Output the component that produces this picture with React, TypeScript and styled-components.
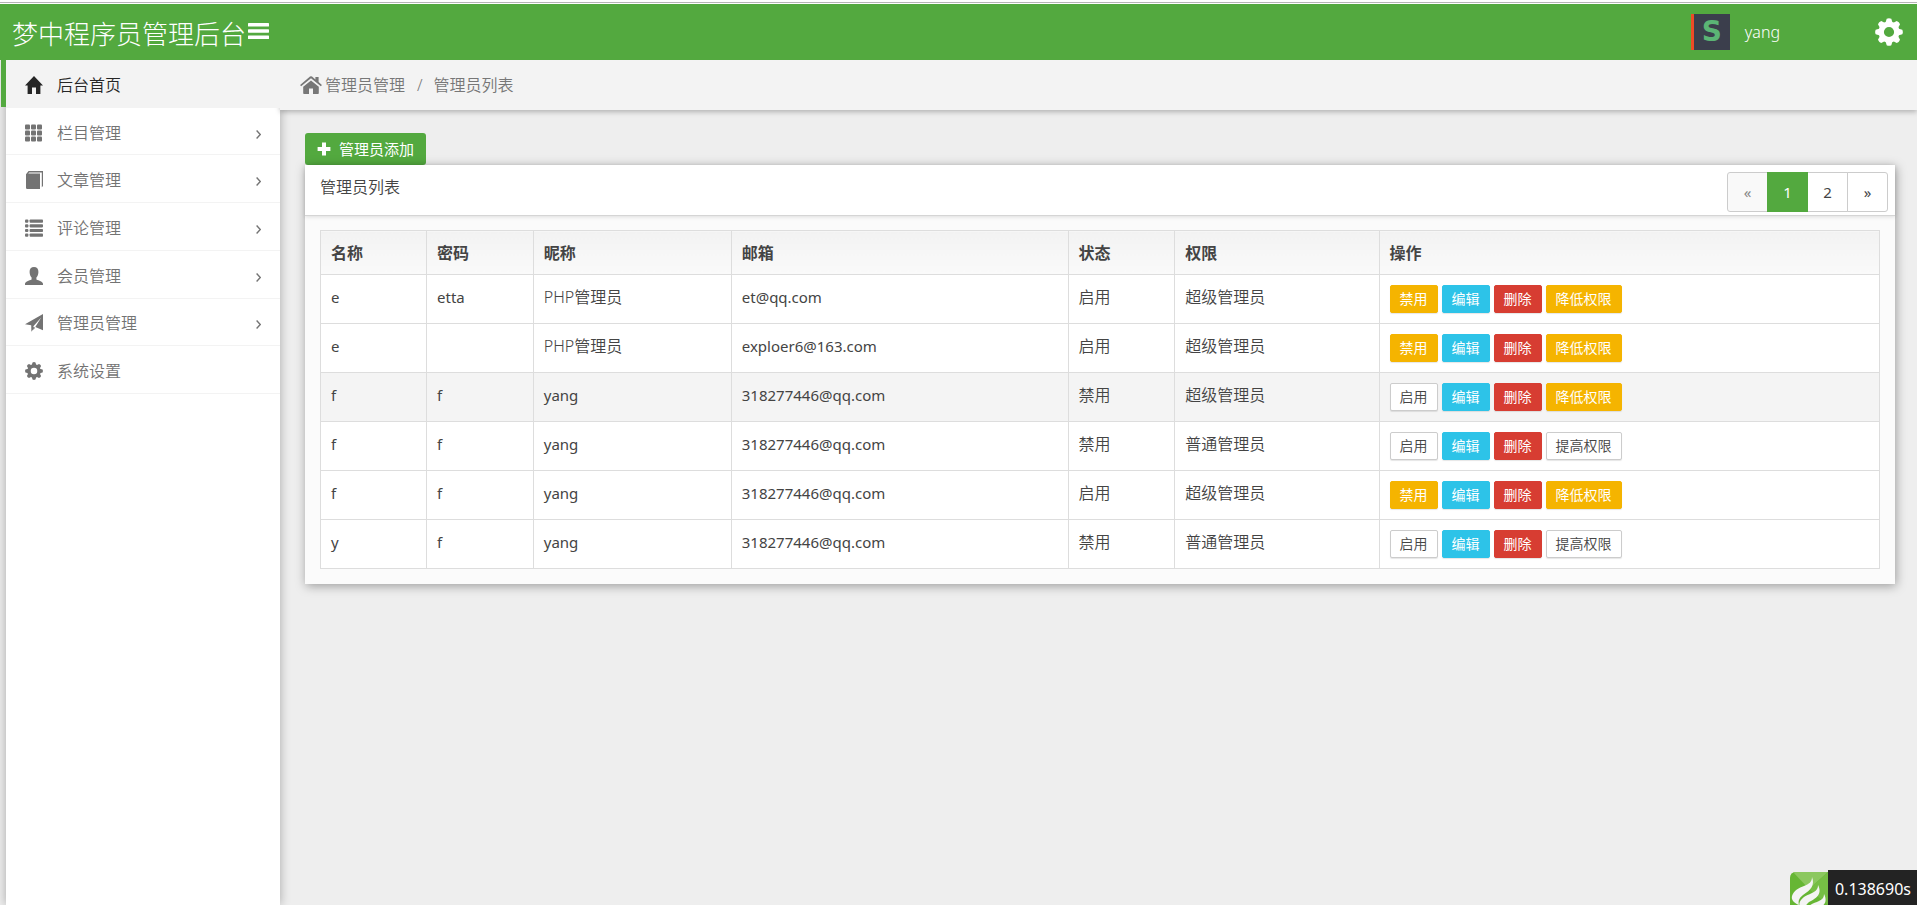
import React from "react";
import styled, { createGlobalStyle, css } from "styled-components";

const GREEN = "#53a93f";

const GlobalStyle = createGlobalStyle`
  * { box-sizing: border-box; }
  body {
    margin: 0;
    background: #eee;
    color: #444;
    font: 350 16px/24px "Noto Sans", "Noto Sans CJK SC", sans-serif;
  }
  a { color: inherit; text-decoration: none; }
  button { font: inherit; cursor: pointer; }
  ul, ol { margin: 0; padding: 0; list-style: none; }
  svg { display: block; flex: none; }
`;

/* ---------- Icons ---------- */

type IconProps = { size?: number };

const HomeIcon = ({ size = 18 }: IconProps) => (
  <svg width={size} height={size} viewBox="0 0 18 18" fill="currentColor">
    <path d="M9 0L18 9.6H15.4V18H11V11.5H7V18H2.6V9.6H0Z" />
  </svg>
);

const GridIcon = ({ size = 18 }: IconProps) => (
  <svg width={size} height={size} viewBox="0 0 18 18" fill="currentColor">
    {[0, 6, 12].map((y) =>
      [0, 6, 12].map((x) => (
        <rect key={`${x}-${y}`} x={x} y={y + 0.5} width="5" height="5" rx="1" />
      ))
    )}
  </svg>
);

const BookIcon = ({ size = 18 }: IconProps) => (
  <svg width={size} height={size} viewBox="0 0 18 18" fill="currentColor">
    <path d="M1 3.2L3.6 0H18V15L16.8 16.2V1.4H4.2L3.2 2.6H15V18H2.2Q1 18 1 16.8Z" />
  </svg>
);

const ListIcon = ({ size = 18 }: IconProps) => (
  <svg width={size} height={size} viewBox="0 0 18 18" fill="currentColor">
    {[0.5, 5.2, 9.9, 14.5].map((y) => (
      <g key={y}>
        <rect x="0" y={y} width="3.4" height="3.2" rx="1" />
        <rect x="4.6" y={y} width="13.4" height="3.2" rx="0.8" />
      </g>
    ))}
  </svg>
);

const UserIcon = ({ size = 18 }: IconProps) => (
  <svg width={size} height={size} viewBox="0 0 18 18" fill="currentColor">
    <path d="M9 0C11.8 0 13.6 1.9 13.4 5C13.3 7.6 12.6 9.4 11.4 10.6V12.6C13.8 13.6 18 14.8 18 17V18H0V17C0 14.8 4.2 13.6 6.6 12.6V10.6C5.4 9.4 4.7 7.6 4.6 5C4.4 1.9 6.2 0 9 0Z" />
  </svg>
);

const SendIcon = ({ size = 18 }: IconProps) => (
  <svg width={size} height={size} viewBox="0 0 18 18" fill="currentColor">
    <path d="M18 0V16.2L10.3 13L16.2 3.6L8.4 12.2L8.8 14.4L6.4 17.8L6.2 11.2L0 10.2Z" />
    <path d="M10 13.6L8.6 16L8.2 13Z" />
  </svg>
);

const GearIcon = ({ size = 18 }: IconProps) => (
  <svg width={size} height={size} viewBox="-14 -14 28 28" fill="currentColor">
    <circle r="7.8" fill="none" stroke="currentColor" strokeWidth="5.4" />
    {[0, 45, 90, 135, 180, 225, 270, 315].map((a) => (
      <path
        key={a}
        d="M-3.6 -9L-2.3 -13.3Q0 -14.4 2.3 -13.3L3.6 -9Z"
        transform={`rotate(${a})`}
      />
    ))}
  </svg>
);

const Chevron = styled.svg`
  margin-top: 3px;
`;

const ChevronIcon = () => (
  <Chevron width="5" height="9" viewBox="0 0 5 9" fill="none" stroke="currentColor" strokeWidth="1.4">
    <path d="M0.6 0.6L4.3 4.5L0.6 8.4" />
  </Chevron>
);

const BarsIcon = () => (
  <svg width="21" height="16" viewBox="0 0 21 16" fill="currentColor">
    {[0, 6.2, 12.5].map((y) => (
      <rect key={y} y={y} width="21" height="3.5" rx="0.6" />
    ))}
  </svg>
);

const ChimneyHomeIcon = () => (
  <svg width="22" height="18" viewBox="0 0 22 18" fill="currentColor">
    <path d="M11 4.4L18.8 10.8V17.2Q18.8 18 18 18H13V12.4H9V18H4Q3.2 18 3.2 17.2V10.8Z" />
    <path d="M10 0.6Q11 -0.2 12 0.6L15.4 3.4V1H18.6V6.1L21.9 8.9L20.9 10.2L11 2.2L1.1 10.2L0.1 8.9Z" />
  </svg>
);

const PlusIcon = () => (
  <svg width="14" height="14" viewBox="0 0 14 14" fill="currentColor">
    <path d="M5 0.6H9V5H13.4V9H9V13.4H5V9H0.6V5H5Z" />
  </svg>
);

const FlameLogo = () => (
  <svg width="38" height="33" viewBox="0 0 38 33">
    <path d="M6 0H38V33H0V6Q0 0 6 0Z" fill="#66b634" />
    <path d="M3 0H38L19 17Z" fill="#8cc85f" />
    <path d="M38 0V33L19 17Z" fill="#76be45" />
    <path
      d="M22 5C25 13 21 18 13 23C9 26 8 29 9 33C4 31 1 28 2 24C4 18 9 16 14 14C19 12 22 10 22 5Z"
      fill="#f4f4f4"
    />
    <path
      d="M28 13C32 21 28 25 21 29C17 31 15 34 15 37C9 36 8 32 11 28C14 24 18 23 22 21C26 19 28 17 28 13Z"
      fill="#f4f4f4"
    />
    <path d="M34 22C38 30 34 34 27 37H17C19 32 25 31 29 29C33 27 34 25 34 22Z" fill="#f4f4f4" />
  </svg>
);

/* ---------- Page frame ---------- */

const Page = styled.div`
  display: flex;
  flex-direction: column;
  min-height: 100vh;
`;

const TopEdge = styled.div`
  height: 4px;
  padding-top: 2px;
  background: #fff;

  &::after {
    content: "";
    display: block;
    height: 1px;
    background: #b5b5b5;
  }
`;

const Header = styled.header`
  position: relative;
  z-index: 1;
  display: flex;
  align-items: center;
  height: 56px;
  padding: 0 14px 0 12px;
  background: ${GREEN};
  color: #fff;
`;

const Brand = styled.a`
  padding-top: 3px;
  margin-right: 2px;
  font-size: 26px;
  line-height: 36px;
  font-weight: 300;
`;

const IconButton = styled.button`
  display: flex;
  padding: 0;
  border: 0;
  background: none;
  color: #fff;
`;

const MenuToggle = styled(IconButton)`
  margin-bottom: 2px;
`;

const Account = styled.a`
  display: flex;
  align-items: center;
  gap: 15px;
  margin-left: auto;
  margin-right: 95px;
  font-size: 16px;
  font-weight: 300;
`;

const Avatar = styled.span`
  display: flex;
  align-items: center;
  justify-content: center;
  width: 39px;
  height: 36px;
  border-left: 3px solid #ee4b26;
  background: #3b3e4c;
  color: #5bb475;
  font: bold 28px/36px "DejaVu Sans", sans-serif;
`;

const Body = styled.div`
  display: flex;
  flex: 1;
`;

/* ---------- Sidebar ---------- */

const Sidebar = styled.nav`
  width: 274px;
  flex: none;
  margin-left: 6px;
  background: #fff;
  box-shadow: 0 0 10px rgba(0, 0, 0, 0.3);
`;

const Menu = styled.ul`
  display: grid;
  grid-auto-rows: 1fr;
  height: 334px;
`;

const MenuItem = styled.li<{ $active?: boolean }>`
  position: relative;
  border-bottom: 1px solid #f3f3f3;
  color: #737373;

  ${(p) =>
    p.$active &&
    css`
      background: #f3f3f3;
      color: #262626;

      &::before {
        content: "";
        position: absolute;
        left: -5px;
        top: 0;
        bottom: 0;
        width: 5px;
        background: ${GREEN};
      }
    `}
`;

const MenuLink = styled.a`
  display: flex;
  align-items: center;
  gap: 14px;
  height: 100%;
  padding: 3px 19px 0;
`;

const MenuText = styled.span`
  flex: 1;
`;

/* ---------- Content ---------- */

const Main = styled.main`
  flex: 1;
  min-width: 0;
`;

const Breadcrumb = styled.ol`
  display: flex;
  align-items: center;
  height: 50px;
  padding: 0 20px;
  background: #f3f3f3;
  box-shadow: 0 2px 5px rgba(0, 0, 0, 0.25);
  color: #777;
`;

const Crumb = styled.li`
  display: flex;
  align-items: center;
  gap: 3px;

  & + &::before {
    content: "/";
    padding: 0 8px 0 12px;
  }
`;

const Content = styled.div`
  padding: 23px 22px 40px 25px;
`;

const AddButton = styled.button`
  display: flex;
  align-items: center;
  gap: 8px;
  height: 32px;
  padding: 0 12px;
  border: 0;
  border-radius: 3px;
  background: ${GREEN};
  color: #fff;
  font-size: 15px;
  font-weight: 400;
`;

const Panel = styled.section`
  background: #fbfbfb;
  box-shadow: 1px 2px 10px rgba(0, 0, 0, 0.35);
`;

const PanelHead = styled.div`
  display: flex;
  justify-content: space-between;
  align-items: flex-start;
  height: 51px;
  padding: 7px 7px 0 15px;
  background: #fff;
  border-bottom: 1px solid #d5d5d5;
  box-shadow: 0 1px 4px rgba(0, 0, 0, 0.12);
`;

const PanelTitle = styled.h1`
  margin: 0;
  padding-top: 3px;
  font-size: 16px;
  font-weight: 350;
  line-height: 24px;
`;

const Pager = styled.ul`
  display: flex;
`;

const PageItem = styled.li`
  & + & {
    margin-left: -1px;
  }
  &:first-child button {
    border-radius: 3px 0 0 3px;
  }
  &:last-child button {
    border-radius: 0 3px 3px 0;
  }
`;

const PageButton = styled.button<{ $current?: boolean }>`
  position: relative;
  z-index: ${(p) => (p.$current ? 1 : 0)};
  width: 41px;
  height: 40px;
  padding: 0;
  border: 1px solid ${(p) => (p.$current ? GREEN : "#ccc")};
  background: ${(p) => (p.$current ? GREEN : "#fff")};
  color: ${(p) => (p.$current ? "#fff" : "#444")};
  font-size: 15px;
  font-weight: 400;

  &:disabled {
    background: #f9f9f9;
    color: #888;
  }
`;

const TableWrap = styled.div`
  padding: 14px 15px 15px;
`;

const Table = styled.table`
  width: 100%;
  table-layout: fixed;
  border-collapse: collapse;
  background: #fff;
`;

const Col = styled.col<{ $share: string }>`
  width: ${(p) => p.$share};
`;

const HeadCell = styled.th`
  height: 44px;
  padding: 0 10px;
  border: 1px solid #ddd;
  background: linear-gradient(#f2f2f2, #fafafa);
  text-align: left;
  font-weight: 700;
`;

const Row = styled.tr<{ $hover?: boolean }>`
  background: ${(p) => (p.$hover ? "#f4f4f4" : "#fff")};
`;

const Cell = styled.td<{ $latin?: boolean }>`
  padding: 10px;
  border: 1px solid #ddd;
  vertical-align: top;
  font-size: ${(p) => (p.$latin ? "15px" : "16px")};
  font-weight: ${(p) => (p.$latin ? 400 : 350)};
`;

const Actions = styled.div`
  display: flex;
  gap: 4px;
`;

type Tone = "warning" | "info" | "danger" | "plain";

const TONES: Record<Tone, string> = {
  warning: "#f5b400",
  info: "#2dc3e8",
  danger: "#d73d32",
  plain: "#fff",
};

const ActionButton = styled.button<{ $tone: Tone }>`
  height: 28px;
  padding: 0 9px;
  border: 1px solid ${(p) => (p.$tone === "plain" ? "#ccc" : TONES[p.$tone])};
  border-radius: 2px;
  background: ${(p) => TONES[p.$tone]};
  box-shadow: 0 1px 1px rgba(0, 0, 0, 0.1);
  color: ${(p) => (p.$tone === "plain" ? "#444" : "#fff")};
  font-size: 14px;
  font-weight: ${(p) => (p.$tone === "plain" ? 350 : 400)};
  line-height: 26px;
`;

/* ---------- Trace badge ---------- */

const Trace = styled.button`
  position: fixed;
  right: 0;
  bottom: 0;
  display: flex;
  align-items: flex-end;
  padding: 0;
  border: 0;
  background: none;
`;

const TraceTime = styled.span`
  height: 35px;
  padding: 0 6px 0 7px;
  background: #232323;
  color: #fff;
  font-size: 16px;
  line-height: 38px;
  font-weight: 400;
`;

/* ---------- Data ---------- */

const MENU = [
  { label: "后台首页", Icon: HomeIcon, active: true },
  { label: "栏目管理", Icon: GridIcon, sub: true },
  { label: "文章管理", Icon: BookIcon, sub: true },
  { label: "评论管理", Icon: ListIcon, sub: true },
  { label: "会员管理", Icon: UserIcon, sub: true },
  { label: "管理员管理", Icon: SendIcon, sub: true },
  { label: "系统设置", Icon: GearIcon },
];

const COLUMNS = [
  { title: "名称", share: "6.8%" },
  { title: "密码", share: "6.85%" },
  { title: "昵称", share: "12.7%" },
  { title: "邮箱", share: "21.6%" },
  { title: "状态", share: "6.85%" },
  { title: "权限", share: "13.1%" },
  { title: "操作", share: "32.1%" },
];

const ADMINS = [
  { name: "e", password: "etta", nick: "PHP管理员", email: "et@qq.com", enabled: true, superUser: true },
  { name: "e", password: "", nick: "PHP管理员", email: "exploer6@163.com", enabled: true, superUser: true },
  { name: "f", password: "f", nick: "yang", email: "318277446@qq.com", enabled: false, superUser: true, hover: true },
  { name: "f", password: "f", nick: "yang", email: "318277446@qq.com", enabled: false, superUser: false },
  { name: "f", password: "f", nick: "yang", email: "318277446@qq.com", enabled: true, superUser: true },
  { name: "y", password: "f", nick: "yang", email: "318277446@qq.com", enabled: false, superUser: false },
];

export default function App() {
  return (
    <Page>
      <GlobalStyle />
      <TopEdge />
      <Header>
        <Brand href="#">梦中程序员管理后台</Brand>
        <MenuToggle aria-label="切换菜单">
          <BarsIcon />
        </MenuToggle>
        <Account href="#">
          <Avatar>S</Avatar>
          yang
        </Account>
        <IconButton aria-label="设置">
          <GearIcon size={28} />
        </IconButton>
      </Header>
      <Body>
        <Sidebar>
          <Menu>
            {MENU.map(({ label, Icon, active, sub }) => (
              <MenuItem key={label} $active={active}>
                <MenuLink href="#">
                  <Icon />
                  <MenuText>{label}</MenuText>
                  {sub && <ChevronIcon />}
                </MenuLink>
              </MenuItem>
            ))}
          </Menu>
        </Sidebar>
        <Main>
          <Breadcrumb>
            <Crumb>
              <ChimneyHomeIcon />
              <a href="#">管理员管理</a>
            </Crumb>
            <Crumb>管理员列表</Crumb>
          </Breadcrumb>
          <Content>
            <AddButton>
              <PlusIcon />
              管理员添加
            </AddButton>
            <Panel>
              <PanelHead>
                <PanelTitle>管理员列表</PanelTitle>
                <Pager>
                  <PageItem><PageButton disabled>«</PageButton></PageItem>
                  <PageItem><PageButton $current>1</PageButton></PageItem>
                  <PageItem><PageButton>2</PageButton></PageItem>
                  <PageItem><PageButton>»</PageButton></PageItem>
                </Pager>
              </PanelHead>
              <TableWrap>
                <Table>
                  <colgroup>
                    {COLUMNS.map((c) => (
                      <Col key={c.title} $share={c.share} />
                    ))}
                  </colgroup>
                  <thead>
                    <tr>
                      {COLUMNS.map((c) => (
                        <HeadCell key={c.title}>{c.title}</HeadCell>
                      ))}
                    </tr>
                  </thead>
                  <tbody>
                    {ADMINS.map((a, i) => (
                      <Row key={i} $hover={a.hover}>
                        <Cell $latin>{a.name}</Cell>
                        <Cell $latin>{a.password}</Cell>
                        <Cell $latin={a.nick === "yang"}>{a.nick}</Cell>
                        <Cell $latin>{a.email}</Cell>
                        <Cell>{a.enabled ? "启用" : "禁用"}</Cell>
                        <Cell>{a.superUser ? "超级管理员" : "普通管理员"}</Cell>
                        <Cell>
                          <Actions>
                            <ActionButton $tone={a.enabled ? "warning" : "plain"}>
                              {a.enabled ? "禁用" : "启用"}
                            </ActionButton>
                            <ActionButton $tone="info">编辑</ActionButton>
                            <ActionButton $tone="danger">删除</ActionButton>
                            <ActionButton $tone={a.superUser ? "warning" : "plain"}>
                              {a.superUser ? "降低权限" : "提高权限"}
                            </ActionButton>
                          </Actions>
                        </Cell>
                      </Row>
                    ))}
                  </tbody>
                </Table>
              </TableWrap>
            </Panel>
          </Content>
        </Main>
      </Body>
      <Trace>
        <FlameLogo />
        <TraceTime>0.138690s</TraceTime>
      </Trace>
    </Page>
  );
}
